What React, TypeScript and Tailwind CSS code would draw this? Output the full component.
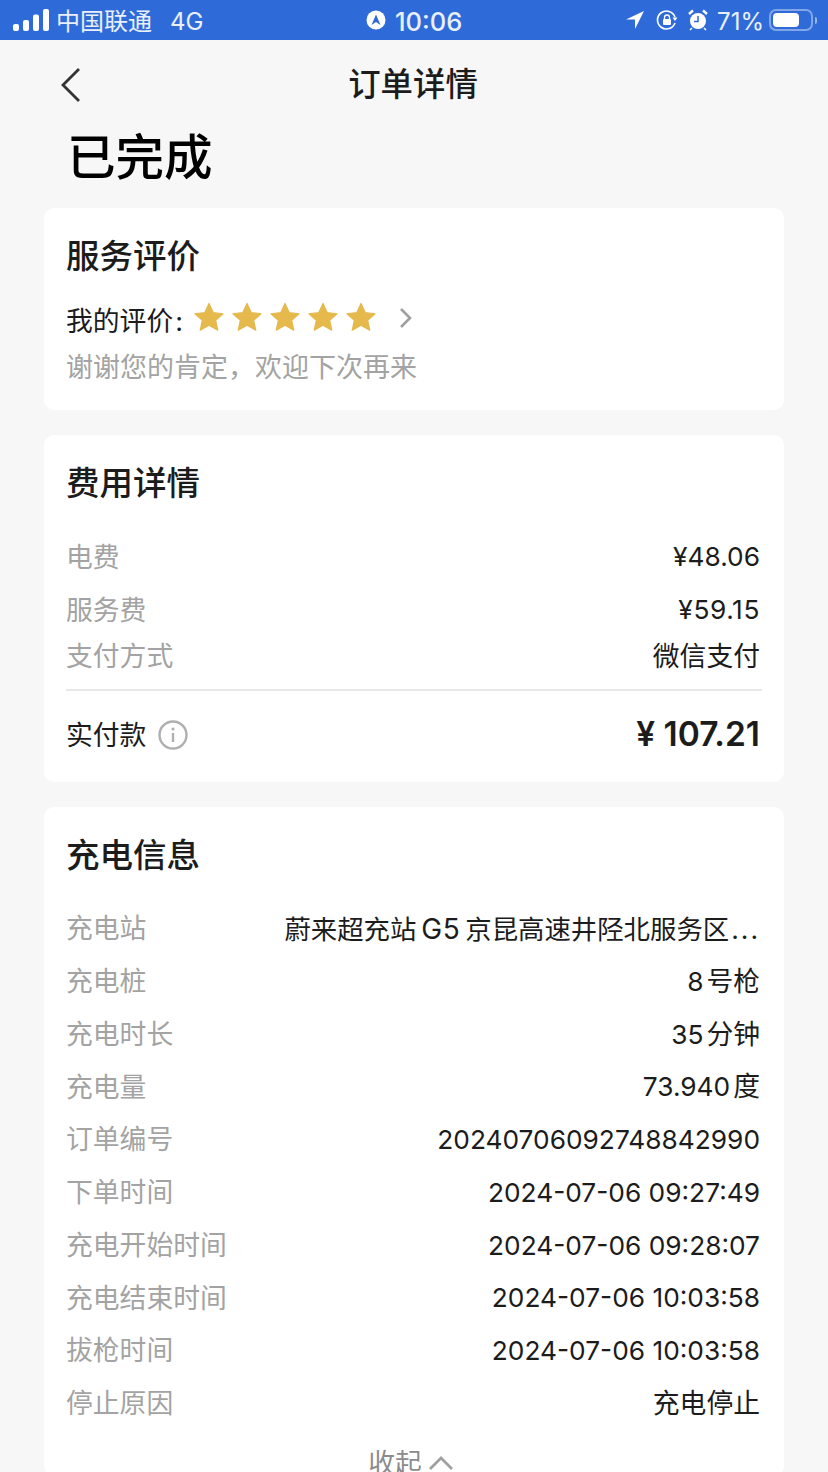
import React from "react";

const font = { sans: "font-['Inter','Noto_Sans_CJK_SC',sans-serif]" };

const numText = "text-[26.3px]";

const chargeRows = [
  {
    label: "充电站",
    value: (
      <span className="text-[26.4px]">
        蔚来超充站<span className="mx-[5px] text-[28px] tracking-[0.5px]">G5</span>京昆高速井陉北服务区
        <span className="ml-[2px] tracking-[2px]">...</span>
      </span>
    ),
  },
  { label: "充电桩", value: <><span className="mr-[3px] text-[26.3px]">8</span>号枪</> },
  { label: "充电时长", value: <><span className="mr-[3px] text-[26.3px]">35</span>分钟</> },
  { label: "充电量", value: <><span className="mr-[3px] text-[26.3px]">73.940</span>度</> },
  { label: "订单编号", value: <span className={numText}>20240706092748842990</span> },
  { label: "下单时间", value: <span className={numText}>2024-07-06 09:27:49</span> },
  { label: "充电开始时间", value: <span className={numText}>2024-07-06 09:28:07</span> },
  { label: "充电结束时间", value: <span className={numText}>2024-07-06 10:03:58</span> },
  { label: "拔枪时间", value: <span className={numText}>2024-07-06 10:03:58</span> },
  { label: "停止原因", value: "充电停止" },
];

function Row({ label, value, className }: { label: string; value: React.ReactNode; className: string }) {
  return (
    <div className={`flex items-center justify-between ${className}`}>
      <span className="text-[#a3a3a3]">{label}</span>
      <span className="text-[#1c1c1c]">{value}</span>
    </div>
  );
}

function Star() {
  return (
    <svg viewBox="0 0 24 24" className="h-[30px] w-[30px]">
      <path
        d="M12 1.2l3.3 7.3 7.9.9-5.9 5.3 1.7 7.8L12 18.5l-7 4 1.7-7.8L.8 9.4l7.9-.9z"
        fill="#e5b94c"
        stroke="#e5b94c"
        strokeLinejoin="round"
      />
    </svg>
  );
}

function StatusBar() {
  return (
    <div className="relative flex h-10 items-center bg-[#2f6bd8] pl-[13px] pr-[11px] text-[24px] leading-none text-white/90">
      <svg viewBox="0 0 36 22" className="h-[22px] w-[36px]">
        <rect x="0" y="15" width="6" height="7" rx="2" fill="#fff" />
        <rect x="10" y="11" width="6" height="11" rx="2" fill="#fff" />
        <rect x="20" y="5.5" width="6" height="16.5" rx="2" fill="#fff" />
        <rect x="30" y="0" width="6" height="22" rx="2" fill="#fff" />
      </svg>
      <span className="ml-[7px] pt-[3px]">中国联通</span>
      <span className="ml-[18px] pt-[3px]">4G</span>
      <div className="absolute left-[366px] top-0 flex h-10 items-center gap-[9px] font-medium">
        <svg viewBox="0 0 20 20" className="h-5 w-5">
          <circle cx="10" cy="10" r="9.5" fill="#fff" />
          <path d="M10 4.5L5.5 15l4.5-3 4.5 3z" fill="#2f6bd8" />
        </svg>
        <span className="pt-[3px] text-[25.5px]">10:06</span>
      </div>
      <div className="ml-auto flex items-center">
        <svg viewBox="0 0 18 18" className="h-[18px] w-[18px]">
          <path d="M18 0L0 8.5h9V18z" fill="#fff" />
        </svg>
        <svg viewBox="0 0 22 22" className="ml-[12px] h-[22px] w-[22px]" fill="none">
          <path d="M19 14a9 9 0 1 1 0-6" stroke="#fff" strokeWidth="1.6" />
          <path d="M16.5 8.5h5L19 12z" fill="#fff" />
          <rect x="7" y="10" width="8" height="6" rx="1" fill="#fff" />
          <path d="M8.5 10V8.5a2.5 2.5 0 0 1 5 0V10" stroke="#fff" strokeWidth="1.3" />
        </svg>
        <svg viewBox="0 0 20 22" className="ml-[10px] h-[22px] w-[20px]" fill="none">
          <circle cx="10" cy="12" r="8" fill="#fff" />
          <path d="M10 7v5.5H6" stroke="#2f6bd8" strokeWidth="1.5" />
          <path d="M1 5l4-3.5M19 5l-4-3.5" stroke="#fff" strokeWidth="2.4" />
          <path d="M4 19l-2 2M16 19l2 2" stroke="#fff" strokeWidth="1.5" />
        </svg>
        <span className="ml-[9px] pt-[3px]">71%</span>
        <div className="ml-[5px] flex h-[22px] w-[44px] items-center rounded-[7px] border-2 border-white/40 p-[2px]">
          <div className="h-full w-[26px] rounded-[4px] bg-white" />
        </div>
        <div className="ml-[2px] h-[7px] w-[2px] rounded-r-full bg-white/50" />
      </div>
    </div>
  );
}

export default function App() {
  return (
    <div className={`${font.sans} h-[1472px] w-[828px] overflow-hidden bg-[#f7f7f7]`}>
      <StatusBar />

      <div className="relative flex h-[88px] items-center justify-center pr-[2px] pt-[2px]">
        <svg viewBox="0 0 24 38" className="absolute left-[59px] top-[26px] h-[38px] w-[24px]" fill="none">
          <path d="M20 3L4 19l16 16" stroke="#333" strokeWidth="2.8" />
        </svg>
        <h1 className="text-[32.4px] font-medium leading-none text-[#1c1c1c]">订单详情</h1>
      </div>

      <div className="h-[80px] pl-[67px] text-[48.5px] font-medium leading-[60px] text-black">已完成</div>

      <div className="mx-[44px] flex flex-col gap-[25px] text-[26.8px] leading-none">
        <section className="h-[202px] rounded-[10px] bg-white pl-[22px] pr-[24px] pt-[30px]">
          <h2 className="text-[33.5px] font-medium leading-[36px] text-[#1c1c1c]">服务评价</h2>
          <div className="mt-[32px] flex h-[30px] items-center">
            <span className="text-[#1c1c1c]">我的评价</span>
            <span className="ml-[2px] text-[#1c1c1c]">:</span>
            <div className="mb-[8px] ml-[11px] flex gap-[8px]">
              <Star />
              <Star />
              <Star />
              <Star />
              <Star />
            </div>
            <svg viewBox="0 0 14 22" className="mb-[7px] ml-[23px] h-[22px] w-[14px]" fill="none">
              <path d="M2 2l9 9-9 9" stroke="#a0a0a0" strokeWidth="2.6" />
            </svg>
          </div>
          <div className="mt-[18px] text-[27px] text-[#a3a3a3]">谢谢您的肯定，欢迎下次再来</div>
        </section>

        <section className="h-[347px] rounded-[10px] bg-white pl-[22px] pr-[24px] pt-[30px]">
          <h2 className="text-[33.5px] font-medium leading-[36px] text-[#1c1c1c]">费用详情</h2>
          <div className="mt-[29px]">
            <Row label="电费" value={<span className={numText}>¥48.06</span>} className="h-[54px]" />
            <Row label="服务费" value={<span className="text-[26.3px] tracking-[0.6px]">¥59.15</span>} className="h-[52px]" />
            <Row label="支付方式" value="微信支付" className="h-[40px]" />
          </div>
          <div className="-mr-[2px] mt-[13px] h-[2px] bg-[#e8e8e8]" />
          <div className="mt-[1px] flex h-[86px] items-center justify-between">
            <div className="flex items-center gap-[12px] text-[#1c1c1c]">
              <span>实付款</span>
              <svg viewBox="0 0 30 30" className="h-[30px] w-[30px]" fill="none">
                <circle cx="15" cy="15" r="13.5" stroke="#b0b0b0" strokeWidth="2.4" />
                <circle cx="15" cy="9" r="1.6" fill="#b0b0b0" />
                <path d="M15 13v9" stroke="#b0b0b0" strokeWidth="2.4" />
              </svg>
            </div>
            <span className="text-[33.5px] font-semibold text-[#1c1c1c]">¥ 107.21</span>
          </div>
        </section>

        <section className="rounded-[10px] bg-white pl-[22px] pr-[24px] pt-[30px]">
          <h2 className="text-[33.5px] font-medium leading-[36px] text-[#1c1c1c]">充电信息</h2>
          <div className="mt-[29.5px]">
            {chargeRows.map((row) => (
              <Row key={row.label} label={row.label} value={row.value} className="h-[52.75px]" />
            ))}
          </div>
          <div className="mt-[19.5px] flex items-center justify-center gap-[6px] pr-[4px] text-[#8c8c8c]">
            <span>收起</span>
            <svg viewBox="0 0 26 16" className="h-[16px] w-[26px]" fill="none">
              <path d="M2 14L13 3l11 11" stroke="#a0a0a0" strokeWidth="2.8" />
            </svg>
          </div>
        </section>
      </div>
    </div>
  );
}
